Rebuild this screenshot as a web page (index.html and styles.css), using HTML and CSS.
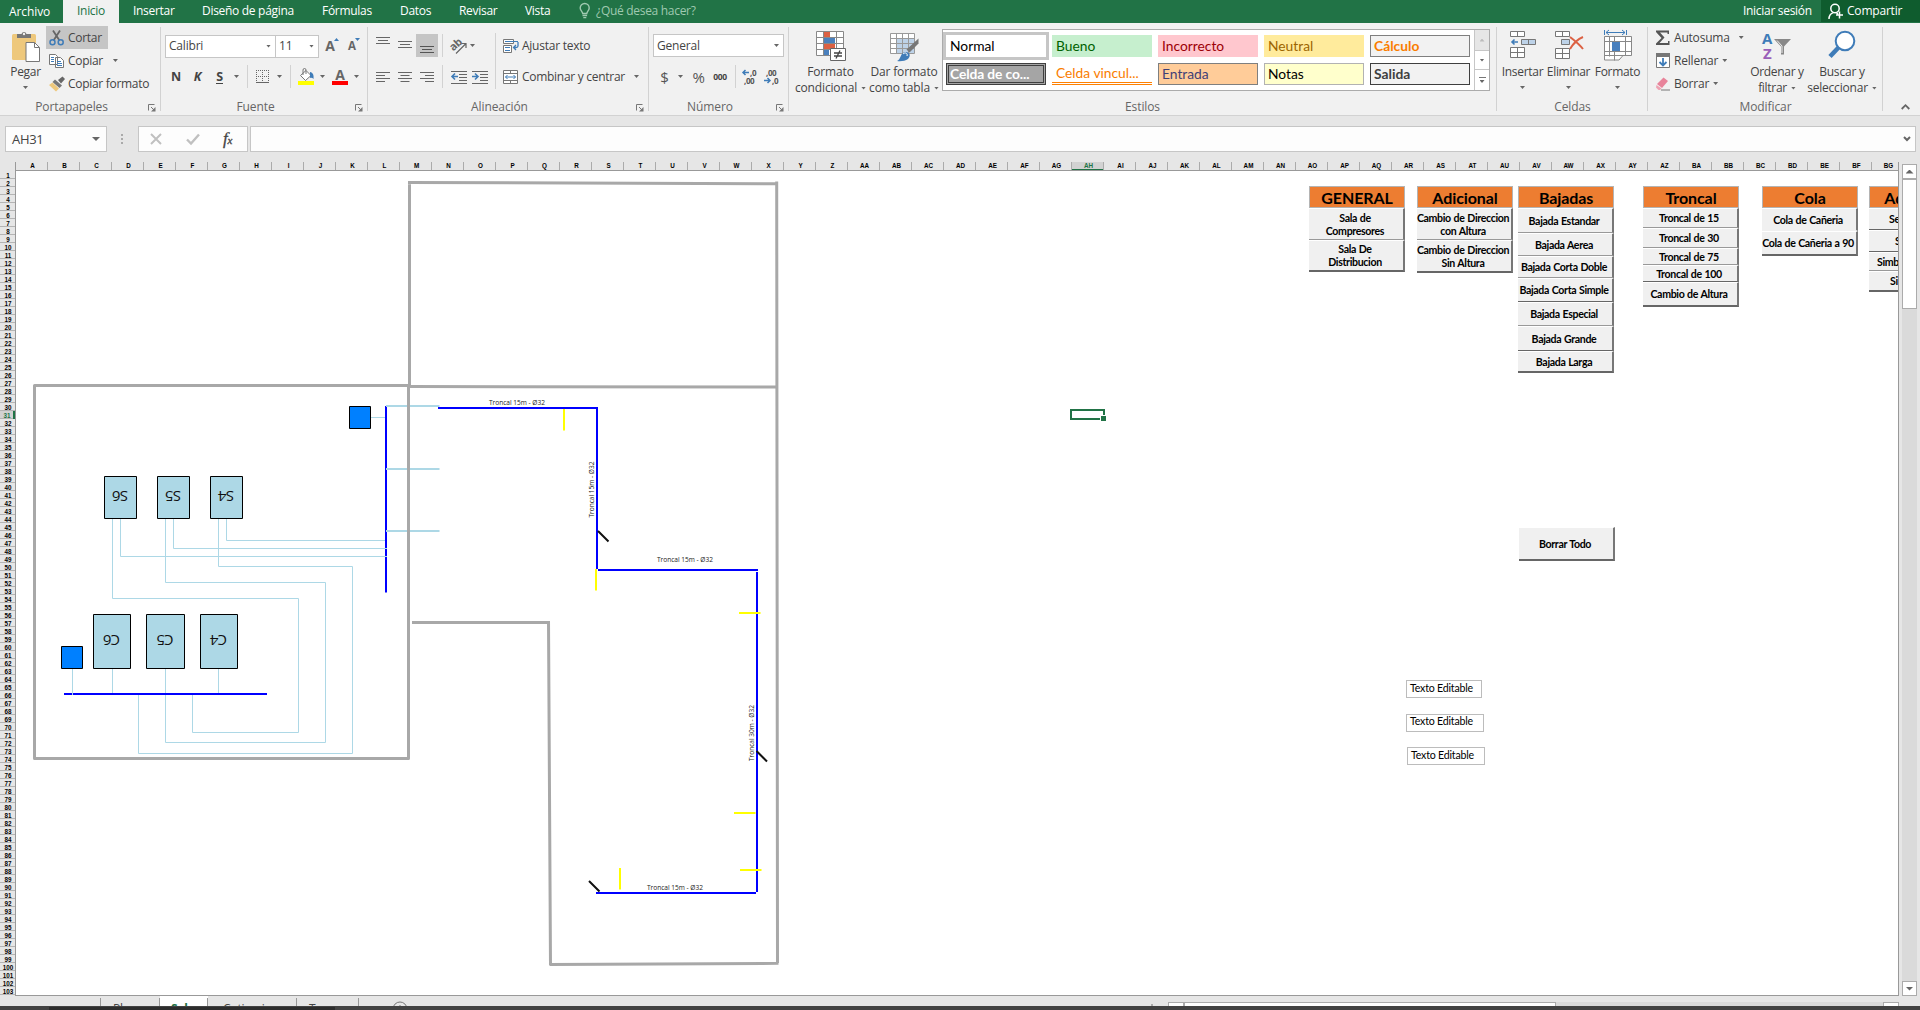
FILE: index.html
```html
<!DOCTYPE html>
<html lang="es">
<head>
<meta charset="utf-8">
<title>Excel</title>
<link rel="stylesheet" href="styles.css">
</head>
<body>
<div class="app">
<nav class="tabs">
  <span class="tab file">Archivo</span>
  <span class="tab active">Inicio</span>
  <span class="tab t-ins">Insertar</span>
  <span class="tab t-dis">Diseño de página</span>
  <span class="tab t-for">Fórmulas</span>
  <span class="tab t-dat">Datos</span>
  <span class="tab t-rev">Revisar</span>
  <span class="tab t-vis">Vista</span>
  <span class="tab tell"><svg width="12" height="16" viewBox="0 0 12 16" fill="none" stroke="#9fc9b0" stroke-width="1.4"><path d="M3.7 10.5C3.5 8.5 1.2 7.5 1.2 5a4.4 4.4 0 0 1 9 0c0 2.500-2.200 3.500-2.400 5.500zM3.500 12.500h4.600M4.300 14.600h3"/></svg>¿Qué desea hacer?</span>
  <span class="login">Iniciar sesión</span>
  <span class="share"><svg width="16" height="17" viewBox="0 0 16 17" fill="none" stroke="#fff" stroke-width="1.5"><circle cx="7" cy="5.500" r="4.200"/><path d="M1 16c0-3.500 1.800-5.600 4.500-6.400M8 9.500l2 1.500M11.500 8.500v7M8 12h7"/></svg>Compartir</span>
</nav>

<header class="ribbon">
  <section class="group g-clip">
    <div class="body">
      <div class="big paste">
        <svg width="30" height="33" viewBox="0 0 30 33"><rect x="1" y="4" width="24" height="26" rx="1.500" fill="#eec87c"/><path d="M6 8V4h4.500a2.600 2.600 0 0 1 5 0H20v4z" fill="#777"/><circle cx="13" cy="4" r="1.200" fill="#f1f1f1"/><path d="M15 12.500h8.500l5 5V31.500H15z" fill="#fff" stroke="#777"/><path d="M23.500 12.500v5h5" fill="none" stroke="#777"/></svg>
        <span>Pegar</span><i class="arr"></i>
      </div>
      <div class="stack clipcmds">
        <div class="cmd pressed"><svg width="16" height="16" viewBox="0 0 16 16" fill="none"><path d="M4 0.500l6.500 10M11 0.500L4.500 10.500" stroke="#666" stroke-width="1.800"/><circle cx="3.500" cy="12.200" r="2.500" stroke="#3f7cb8" stroke-width="1.500"/><circle cx="11.700" cy="12.200" r="2.500" stroke="#3f7cb8" stroke-width="1.500"/></svg><span>Cortar</span></div>
        <div class="cmd"><svg width="16" height="16" viewBox="0 0 16 16" stroke="#777" fill="#fff"><path d="M.5 1.500h6l2 2v8H.5zM6.500 4.500h5l3 3v7h-8z"/><path d="M2 4.500h3M2 6.500h3M2 8.500h3M8 8.500h4M8 10.500h5M8 12.500h5" stroke="#3f7cb8"/></svg><span>Copiar</span><i class="arr gap-copy"></i></div>
        <div class="cmd"><svg width="16" height="16" viewBox="0 0 16 16"><path d="M9 4l4.500-3.500L16 3l-4 4.500z" fill="#666"/><path d="M6 3.500l7 6-2.500 2.500-7-6z" fill="#777"/><path d="M3.500 6.500l6.500 6L7 15.500 0 9z" fill="#eec87c"/></svg><span>Copiar formato</span></div>
      </div>
    </div>
    <div class="label">Portapapeles<svg class="launch" width="8" height="8" viewBox="0 0 8 8"><path d="M.5 6.500v-6h6M3 3l3 3" fill="none" stroke="#777"/><path d="M7.500 3v4.500H3z" fill="#777"/></svg></div>
  </section>

  <section class="group g-font">
    <div class="body rows">
      <div class="row font1">
        <div class="combo c-font"><span>Calibri</span><i class="arr"></i></div>
        <div class="combo c-size"><span>11</span><i class="arr"></i></div>
        <span class="grow-a">A<svg width="5" height="3" viewBox="0 0 5 3"><path d="M0 3L2.500 0 5 3z" fill="#3f7cb8"/></svg></span>
        <span class="grow-a small">A<svg width="5" height="3" viewBox="0 0 5 3"><path d="M0 0h5L2.500 3z" fill="#3f7cb8"/></svg></span>
      </div>
      <div class="row font2">
        <b>N</b><b><em>K</em></b><b class="under">S</b><i class="arr"></i><i class="sep"></i>
        <svg width="13" height="13" viewBox="0 0 13 13" stroke="#666" fill="none"><path d="M0 .5h13M.5 0v12M6.500 0v12M12.500 0v12M0 6.500h13" stroke-dasharray="1 1"/><path d="M0 12.500h13"/></svg>
        <i class="arr"></i><i class="sep"></i>
        <svg width="16" height="17" viewBox="0 0 16 17"><path d="M8 2.500l5 5-5.500 5-5-5z" fill="#fff" stroke="#777"/><path d="M5 7V2a1.500 1.500 0 0 1 3 0v4" fill="none" stroke="#777"/><path d="M12 4c3 .5 4 3 3.500 7-1-1-2-1.500-3.500-1z" fill="#3f7cb8"/><path d="M0 13h16v4H0z" fill="#ff0"/></svg>
        <i class="arr"></i>
        <span class="fontcolor">A</span>
        <i class="arr"></i>
      </div>
    </div>
    <div class="label">Fuente<svg class="launch" width="8" height="8" viewBox="0 0 8 8"><path d="M.5 6.500v-6h6M3 3l3 3" fill="none" stroke="#777"/><path d="M7.500 3v4.500H3z" fill="#777"/></svg></div>
  </section>

  <section class="group g-align">
    <div class="body">
      <div class="rows">
        <div class="row al">
          <svg width="14" height="23" viewBox="0 0 14 23" stroke="#666"><path d="M0 3.500h14M2 6.500h10M0 9.500h14"/></svg>
          <svg width="14" height="23" viewBox="0 0 14 23" stroke="#666"><path d="M0 7.500h14M2 10.500h10M0 13.500h14"/></svg>
          <span class="on"><svg width="14" height="23" viewBox="0 0 14 23" stroke="#555"><path d="M0 12.500h14M2 15.500h10M0 18.500h14"/></svg></span>
          <i class="sep"></i>
          <svg width="18" height="18" viewBox="0 0 18 18"><text x="0" y="12" transform="rotate(-42 5 9)" class="ab">ab</text><path d="M6 16.500L15.500 7M11.500 6.500h4.500v4.500" fill="none" stroke="#666" stroke-width="1.200"/></svg>
          <i class="arr left"></i>
        </div>
        <div class="row al">
          <svg width="14" height="12" viewBox="0 0 14 12" stroke="#666"><path d="M0 1.500h14M0 4.500h9M0 7.500h14M0 10.500h9"/></svg>
          <svg width="14" height="12" viewBox="0 0 14 12" stroke="#666"><path d="M0 1.500h14M2.500 4.500h9M0 7.500h14M2.500 10.500h9"/></svg>
          <svg width="14" height="12" viewBox="0 0 14 12" stroke="#666"><path d="M0 1.500h14M5 4.500h9M0 7.500h14M5 10.500h9"/></svg>
          <i class="sep"></i>
          <svg width="16" height="14" viewBox="0 0 16 14" stroke="#666"><path d="M0 1.500h16M8 4.500h8M8 7.500h8M8 10.500h8M0 13.500h16"/><path d="M1 6.500h6M4 3.500l-3 3 3 3" fill="none" stroke="#3f7cb8" stroke-width="1.600"/></svg>
          <svg width="16" height="14" viewBox="0 0 16 14" stroke="#666"><path d="M0 1.500h16M8 4.500h8M8 7.500h8M8 10.500h8M0 13.500h16"/><path d="M0 6.500h6M3 3.500l3 3-3 3" fill="none" stroke="#3f7cb8" stroke-width="1.600"/></svg>
        </div>
      </div>
      <i class="sep tall"></i>
      <div class="rows wraps">
        <div class="row flexrow"><svg width="16" height="16" viewBox="0 0 16 16" fill="#fff" stroke="#777"><path d="M.5 1.500h10v4H.5zM.5 7.500h8v7h-8z"/><path d="M2 3.500h13M2 9.500h5M2 12.500h5" stroke="#3f7cb8"/><path d="M15 4v4c0 1-.5 1.500-2 1.500h-2M13 7l-2.500 2.500L13 12" fill="none" stroke="#3f7cb8" stroke-width="1.300"/></svg><span>Ajustar texto</span></div>
        <div class="row flexrow merge"><svg width="16" height="16" viewBox="0 0 16 16" fill="#fff" stroke="#777"><path d="M.5 1.500h14v13H.5zM.5 4.500h14M.5 11.500h14M7.500 1.500v3M7.500 11.500v3"/><path d="M2.500 8h10M4.500 6l-2 2 2 2M10.500 6l2 2-2 2" fill="none" stroke="#3f7cb8"/></svg><span>Combinar y centrar</span><i class="arr gap-merge"></i></div>
      </div>
    </div>
    <div class="label">Alineación<svg class="launch" width="8" height="8" viewBox="0 0 8 8"><path d="M.5 6.500v-6h6M3 3l3 3" fill="none" stroke="#777"/><path d="M7.500 3v4.500H3z" fill="#777"/></svg></div>
  </section>

  <section class="group g-num">
    <div class="body rows">
      <div class="combo c-num"><span>General</span><i class="arr"></i></div>
      <div class="row num2">
        <span class="sym">$</span><i class="arr"></i><span class="sym">%</span><span class="zeros">000</span><i class="sep"></i>
        <svg width="16" height="16" viewBox="0 0 16 16"><text x="8" y="7" class="dec">,0</text><text x="2" y="15" class="dec">,00</text><path d="M1 3.500h6M3.500 1L1 3.500 3.500 6" fill="none" stroke="#3f7cb8" stroke-width="1.500"/></svg>
        <svg width="16" height="16" viewBox="0 0 16 16"><text x="2" y="7" class="dec">,00</text><text x="8" y="15" class="dec">,0</text><path d="M0 11.500h6M3.500 9L6 11.500 3.500 14" fill="none" stroke="#3f7cb8" stroke-width="1.500"/></svg>
      </div>
    </div>
    <div class="label">Número<svg class="launch" width="8" height="8" viewBox="0 0 8 8"><path d="M.5 6.500v-6h6M3 3l3 3" fill="none" stroke="#777"/><path d="M7.500 3v4.500H3z" fill="#777"/></svg></div>
  </section>

  <section class="group g-styles">
    <div class="body">
      <div class="big b-cond">
        <svg width="30" height="33" viewBox="0 0 30 33"><path d="M.5 1.500h27v24H.5z" fill="#fff"/><path d="M8 2h6v5H8zM8 14h11v5H8z" fill="#dc6143"/><path d="M8 8h11v5H8zM8 20h5v5H8z" fill="#4a80bd"/><path d="M.5 1.500h27v24H.5zM7.500 1v24M20.500 1v24M.5 7.500h27M.5 13.500h27M.5 19.500h27" fill="none" stroke="#888"/><path d="M14.500 18.500h15v12h-15z" fill="#fff" stroke="#666"/><path d="M18 23h8M18 26h8M24 20.500l-4 8" stroke="#444" stroke-width="1.300"/></svg>
        <span>Formato</span><span>condicional<i class="arr"></i></span>
      </div>
      <div class="big b-table">
        <svg width="30" height="33" viewBox="0 0 30 33"><path d="M1.500 3.500h24v20h-24z" fill="#fff"/><path d="M7 9h18v15H7z" fill="#bdd2e8"/><path d="M1.500 3.500h24v20h-24zM7.500 3v20M13.500 3v20M19.500 3v20M1.500 8.500h24M1.500 13.500h24M1.500 18.500h24" fill="none" stroke="#999"/><path d="M29.500 8.500v5l-9 9-3-3z" fill="#777"/><path d="M8 31c4-1 3-9 9-9 4 0 5 4 2 7-3 2-7 2.500-11 2z" fill="#3f7cb8"/><path d="M14 24c2-2 5-1 4 2" stroke="#fff" fill="none"/></svg>
        <span>Dar formato</span><span>como tabla<i class="arr"></i></span>
      </div>
      <div class="gallery">
        <div class="cells">
          <div class="cell normal">Normal</div><div class="cell bueno">Bueno</div><div class="cell incorrecto">Incorrecto</div><div class="cell neutral">Neutral</div><div class="cell calculo">Cálculo</div>
          <div class="cell comprob"><span>Celda de co...</span></div><div class="cell vinc">Celda vincul...</div><div class="cell entrada">Entrada</div><div class="cell notas">Notas</div><div class="cell salida">Salida</div>
        </div>
        <div class="gscroll"><span class="off"><i class="arr up"></i></span><span><i class="arr"></i></span><span class="more"><i class="arr"></i></span></div>
      </div>
    </div>
    <div class="label">Estilos</div>
  </section>

  <section class="group g-cells">
    <div class="body">
      <div class="big b-ins">
        <svg width="28" height="33" viewBox="0 0 28 33" fill="#fff" stroke="#777"><path d="M1.500 1.500h14v5h-14zM8.500 1.500v5M1.500 17.500h14v10h-14zM8.500 17.500v10M1.500 22.500h14"/><path d="M12.500 9.500h14v5h-14zM19.500 9.500v5" fill="#bdd2e8"/><path d="M3 12h6M5.500 9.500L3 12l2.500 2.500" fill="none" stroke="#3f7cb8" stroke-width="1.600"/></svg>
        <span>Insertar</span><i class="arr"></i>
      </div>
      <div class="big b-del">
        <svg width="30" height="33" viewBox="0 0 30 33" fill="#fff" stroke="#777"><path d="M1.500 1.500h14v5h-14zM8.500 1.500v5M1.500 18.500h14v10h-14zM8.500 18.500v10M1.500 23.500h14"/><path d="M7.500 9.500h8v5h-8z" fill="#bdd2e8"/><path d="M16 7c4 3 9 7 13 12M29 7c-5 2-10 7-13 12" stroke="#dc6143" stroke-width="2" fill="none"/></svg>
        <span>Eliminar</span><i class="arr"></i>
      </div>
      <div class="big b-fmt">
        <svg width="28" height="33" viewBox="0 0 28 33" fill="#fff" stroke="#888"><path d="M.5 6.500h27v19H19l-4 4.500H.5zM5.500 6.500v20M21.500 6.500v19M.5 11.500h27M.5 21.500h27M.5 25.500h20M10.500 6.500v24"/><path d="M8 12h8v9H8z" fill="#4a80bd" stroke="none"/><path d="M.5 0v5M22.500 0v5M2 2.500h19M5 0L2 2.500 5 5M18 0l3 2.500L18 5" fill="none" stroke="#3f7cb8"/></svg>
        <span>Formato</span><i class="arr"></i>
      </div>
    </div>
    <div class="label">Celdas</div>
  </section>

  <section class="group g-edit">
    <div class="body">
      <div class="stack editcmds">
        <div class="cmd"><svg width="16" height="16" viewBox="0 0 16 16"><path d="M1 .5h13V4h-1.500V2.500H5l4.500 5L4.500 13H13V11h1.500v4H1v-1.500L6.500 8 1 2z" fill="#555"/></svg><span>Autosuma</span><i class="arr gap-sum"></i></div>
        <div class="cmd"><svg width="16" height="16" viewBox="0 0 16 16"><path d="M1.500.5h13v14h-13z" fill="#fff" stroke="#777"/><path d="M1 0h14v4H1z" fill="#777"/><path d="M8 5v7.500M4.500 9L8 12.500 11.500 9" fill="none" stroke="#3f7cb8" stroke-width="1.800"/></svg><span>Rellenar</span><i class="arr"></i></div>
        <div class="cmd"><svg width="16" height="16" viewBox="0 0 16 16"><path d="M8.500 1.500L13 5l-6 7-5-4z" fill="#e8839a"/><path d="M1.500 9l5 3.500-1.500 1.500H3.500L1 11.500z" fill="#eea3b3"/><path d="M6 14h9" stroke="#777"/></svg><span>Borrar</span><i class="arr"></i></div>
      </div>
      <div class="big b-sort">
        <svg width="30" height="33" viewBox="0 0 30 33"><text x="0" y="14" class="az a" textLength="11">A</text><text x="1" y="28.500" class="az z">Z</text><path d="M12 9h17l-7 7.500v8h-3v-8z" fill="#888"/><path d="M15 10.500l5 5.500v7" stroke="#eee" fill="none"/></svg>
        <span>Ordenar y</span><span>filtrar<i class="arr"></i></span>
      </div>
      <div class="big b-find">
        <svg width="28" height="33" viewBox="0 0 28 33" fill="none"><path d="M11 17L2 26.500" stroke="#3f7cb8" stroke-width="4.500"/><circle cx="17" cy="11" r="9.300" fill="#fff" stroke="#3f7cb8" stroke-width="2"/></svg>
        <span>Buscar y</span><span>seleccionar<i class="arr"></i></span>
      </div>
    </div>
    <div class="label">Modificar</div>
  </section>
  <svg class="collapse" width="9" height="6" viewBox="0 0 9 6"><path d="M.7 5L4.500 1.200 8.300 5" fill="none" stroke="#666" stroke-width="1.800"/></svg>
</header>

<div class="formulabar">
  <div class="box namebox"><span>AH31</span><i class="arr big-arr"></i></div>
  <svg class="dots" width="2" height="11" viewBox="0 0 2 11" fill="#aaa"><path d="M0 0h2v2H0zM0 4h2v2H0zM0 8h2v2H0z"/></svg>
  <div class="box fx">
    <svg width="12" height="12" viewBox="0 0 12 12"><path d="M1 1l10 10M11 1L1 11" stroke="#c0c0c0" stroke-width="2"/></svg>
    <svg width="14" height="12" viewBox="0 0 14 12"><path d="M1 6.500l4 4L13 1.500" fill="none" stroke="#c0c0c0" stroke-width="2.400"/></svg>
    <span><em>f</em><small>x</small></span>
  </div>
  <div class="box input"><svg width="8" height="6" viewBox="0 0 8 6"><path d="M1 1l3 3 3-3" fill="none" stroke="#666" stroke-width="2"/></svg></div>
</div>

<main class="work">
  <div class="rowheads" id="rows"></div>
  <div class="gridcol">
    <div class="colheads" id="cols"></div>
    <div class="canvas">
      <svg class="plan" width="1882" height="824" viewBox="16 171 1882 824" fill="none">
        <g stroke="#add8e6">
          <path d="M371 417.500h15M112.500 519v79.500h186v134h-106V695M120.500 519v37.500H386M165.500 519v63.500h160v160h-160V669M173.500 519v29.500H386M218.500 519v47.500h134v187h-214V695M226.500 519v21.500H386M112.500 669v25M218.500 669v25"/>
        </g>
        <g stroke="#a8a8a8" stroke-width="3">
          <path d="M409.500 182v203M408 182.500L778 183.800M776.700 181.500L777.500 963M412 622.500h137M548.500 621L550.500 965M549.500 964.500L778.500 963.300M409 386.500L776 387"/>
        </g>
        <g stroke="#00f" stroke-width="2">
          <path d="M386 406v186.500M64 694h203M438 408h160M597 407v162M598 570h160M757 572v320M596 893h160"/>
        </g>
        <path d="M386 406h53.500M386 469h53.500M386 531h53.500" stroke="#add8e6" stroke-width="2"/>
        <path d="M72.500 669v26M385 548.500h2M385 556.500h2" stroke="#add8e6"/>
        <path d="M34.500 385.500h374v373h-374z" stroke="#a8a8a8" stroke-width="3" stroke-linejoin="round"/>
        <path d="M564 409v21.500M596 569v21.500M739 613h21.500M734 813h21.500M620 868v21.500M740 870h21.500" stroke="#ff0" stroke-width="2"/>
        <path d="M598 531l10.500 10.500M756.500 751l10.500 10.500M589 881l10.500 10.500" stroke="#111" stroke-width="2"/>
        <g stroke="#000" fill="#add8e6">
          <path d="M104.500 476.500h32v42h-32zM157.500 476.500h32v42h-32zM210.500 476.500h32v42h-32zM93.500 614.500h37v54h-37zM146.500 614.500h38v54h-38zM200.500 614.500h37v54h-37z"/>
          <path d="M349.500 406.500h21v22h-21zM61.500 646.500h21v22h-21z" fill="#0080ff"/>
        </g>
        <g class="unit">
          <text transform="translate(128 491) rotate(180)" textLength="16">S6</text>
          <text transform="translate(181 491) rotate(180)" textLength="16">S5</text>
          <text transform="translate(234 491) rotate(180)" textLength="16">S4</text>
          <text transform="translate(120 635) rotate(180)" textLength="17">C6</text>
          <text transform="translate(173.500 635) rotate(180)" textLength="17">C5</text>
          <text transform="translate(227 635) rotate(180)" textLength="17">C4</text>
        </g>
        <g class="pipe">
          <text x="489" y="405" textLength="56">Troncal 15m - Ø32</text>
          <text x="657" y="562" textLength="56">Troncal 15m - Ø32</text>
          <text x="647" y="890" textLength="56">Troncal 15m - Ø32</text>
          <text transform="translate(594 517.500) rotate(-90)" textLength="56">Troncal 15m - Ø32</text>
          <text transform="translate(754 761) rotate(-90)" textLength="56">Troncal 30m - Ø32</text>
        </g>
      </svg>
      <div class="selection"><i></i></div>

      <div class="panel p-general"><h3>GENERAL</h3><button class="h32">Sala de<br>Compresores</button><button class="h32 last">Sala De<br>Distribucion</button></div>
      <div class="panel p-adic"><h3>Adicional</h3><button class="h32">Cambio de Direccion<br>con Altura</button><button class="h33 last">Cambio de Direccion<br>Sin Altura</button></div>
      <div class="panel p-baj"><h3>Bajadas</h3><button class="h25">Bajada Estandar</button><button class="h23">Bajada Aerea</button><button class="h22">Bajada Corta Doble</button><button class="h24 dark">Bajada Corta Simple</button><button class="h24">Bajada Especial</button><button class="h25 dark">Bajada Grande</button><button class="h22 last">Bajada Larga</button></div>
      <div class="panel p-tron"><h3>Troncal</h3><button class="h20">Troncal de 15</button><button class="h20">Troncal de 30</button><button class="h17">Troncal de 75</button><button class="h17 dark">Troncal de 100</button><button class="h25 last">Cambio de Altura</button></div>
      <div class="panel p-cola"><h3>Cola</h3><button class="h23 flat">Cola de Cañeria</button><button class="h25 last">Cola de Cañeria a 90</button></div>
      <div class="panel p-extra"><h3>Adicional</h3><button class="h22 dark">Se</button><button class="h22 dark e2">S</button><button class="h19 e3">Simb</button><button class="h21 last e4">Si</button></div>
      <div class="panel p-clear"><button class="h34 last">Borrar Todo</button></div>
      <div class="edit e-a">Texto Editable</div>
      <div class="edit e-b">Texto Editable</div>
      <div class="edit e-c">Texto Editable</div>
    </div>
  </div>
  <div class="vscroll"><span class="sbtn"><i class="arr up big-arr"></i></span><span class="thumb"></span><span class="track"></span><span class="sbtn"><i class="arr big-arr"></i></span></div>
</main>

<footer class="sheets">
  <div class="sheet first"></div>
  <div class="sheet s-pl">Planos</div>
  <div class="sheet current">Sala</div>
  <div class="sheet s-cot">Cotizacion</div>
  <div class="sheet s-tr">Tramos</div>
  <svg class="plus" width="16" height="16" viewBox="0 0 16 16" fill="none" stroke="#777"><circle cx="8" cy="8" r="7"/><path d="M8 4v8M4 8h8"/></svg>
  <div class="hscroll"><i class="hdot"></i><span class="hbtn"></span><span class="hthumb"></span><span class="htrack"></span><span class="hbtn"></span></div>
</footer>
<div class="taskbar"><i></i></div>
</div>
<script src="headers.js"></script>
</body>
</html>
```
FILE: styles.css
```css
* { box-sizing: border-box; }
body { margin: 0; background: #fff; overflow: hidden; }
.app { width: 1920px; height: 1010px; display: flex; flex-direction: column; overflow: hidden; font: 12px/16px "Open Sans", "Noto Sans", sans-serif; color: #444; letter-spacing: -0.3px; }
svg { flex: none; display: block; overflow: visible; }
.arr { flex: none; width: 5px; height: 3px; background: #666; clip-path: polygon(0 0, 100% 0, 50% 100%); }
.arr.up { clip-path: polygon(0 100%, 100% 100%, 50% 0); }
.arr.big-arr { width: 8px; height: 4px; }
.sep { width: 1px; height: 23px; background: #d2d2d2; }

.tabs { height: 23px; flex: none; display: flex; background: #217346; color: #fff; white-space: nowrap; }
.tab { line-height: 22px; flex: none; }
.tab.file { width: 63px; padding-left: 9px; line-height: 24px; letter-spacing: -0.1px; }
.tab.active { width: 56px; background: #f1f1f1; color: #217346; text-align: center; }
.t-ins { width: 68px; margin-left: 14px; }
.t-dis { width: 121px; padding-left: 1px; }
.t-for { width: 78px; }
.t-dat { width: 59px; }
.t-rev { width: 66px; }
.t-vis { width: 54px; }
.tell { display: flex; gap: 5px; color: #9fc9b0; width: 1164px; }
.tell svg { margin-top: 3px; }
.login { width: 78px; line-height: 22px; flex: none; }
.share { width: 99px; background: #0f5c2e; display: flex; gap: 3px; padding: 0 0 0 7px; line-height: 22px; height: 22px; letter-spacing: -0.2px; }
.share svg { margin-top: 3px; }

.ribbon { height: 93px; flex: none; background: #f1f1f1; border-bottom: 1px solid #d2d2d2; display: flex; white-space: nowrap; }
.group { flex: none; height: 92px; padding-top: 3px; display: flex; flex-direction: column; background: linear-gradient(#d2d2d2, #d2d2d2) right 4px / 1px 84px no-repeat; }
.g-clip { width: 161px; }
.g-font { width: 207px; }
.g-align { width: 281px; }
.g-num { width: 140px; }
.g-styles { width: 708px; }
.g-cells { width: 151px; }
.g-edit { width: 235px; }
.body { height: 72px; flex: none; display: flex; }
.label { display: flex; justify-content: center; align-items: center; color: #666; height: 16px; margin-left: -14px; margin-top: 1px; position: relative; width: calc(100% + 10px); letter-spacing: -0.1px; }
.g-styles .label, .g-cells .label { margin-left: 0; width: 100%; }
.g-styles .label { padding-right: 1px; }
.g-edit .label { margin-left: 0; width: 100%; }
.launch { position: absolute; right: 1px; top: 5px; }
.collapse { margin: 81px 0 0 18px; }

.big { display: flex; flex-direction: column; align-items: center; padding-top: 4px; }
.big svg { margin-bottom: 1px; }
.big > .arr { margin-top: 6px; }
.big span { display: flex; align-items: center; line-height: 16px; }
.big span .arr { margin-left: 4px; }
.paste { width: 46px; padding-left: 5px; }
.stack { display: flex; flex-direction: column; }
.cmd { height: 23px; display: flex; align-items: center; padding-left: 3px; }
.cmd svg { margin-right: 3px; }
.cmd .arr { margin-left: 4px; }
.cmd .gap-copy { margin-left: 10px; }
.cmd .gap-sum { margin-left: 9px; }
.pressed { background: #c5c5c5; width: 62px; }

.rows { display: flex; flex-direction: column; padding-top: 8px; gap: 8px; }
.row { display: grid; height: 23px; align-items: center; justify-items: center; }
.combo { height: 23px; background: #fff; border: 1px solid #c6c6c6; display: flex; align-items: center; justify-content: space-between; padding: 0 4px 0 3px; letter-spacing: -0.2px; }
.body.rows { padding-left: 4px; }
.font1 { grid-template-columns: 111px 43px 26px 18px; justify-items: stretch; }
.c-size { margin-left: -1px; }
.c-font, .c-size { font-size: 12px; }
.grow-a { display: flex; justify-content: center; font: bold 14px/24px "Open Sans", sans-serif; color: #666; letter-spacing: 0; }
.grow-a.small { font-size: 11.5px; }
.grow-a svg { margin: 4px 0 0 -1px; }
.font2 { grid-template-columns: 22px 21px 23px 11px 11px 19px 15px 7px 24px 9px 26px 7px; }
.font2 b { font-size: 12.5px; }
.under { border-bottom: 1px solid #444; line-height: 13px; }
.fontcolor { width: 16px; height: 17px; border-bottom: 4px solid #f00; text-align: center; font: bold 14px/13px "Open Sans", sans-serif; color: #666; }
.g-align .rows { padding-left: 4px; }
.al { grid-template-columns: 22px 22px 22px 9px 23px 20px; }
.on { width: 22px; height: 23px; background: #c5c5c5; padding-left: 4px; }
.arr.left { justify-self: start; }
.ab { font: bold 11px "Open Sans", sans-serif; fill: #666; letter-spacing: -0.4px; }
.sep.tall { height: 56px; margin: 7px 0 0 5px; }
.g-align .wraps { padding-left: 7px; }
.flexrow { display: flex; gap: 3px; letter-spacing: -0.25px; }
.merge { letter-spacing: -0.28px; }
.gap-merge { margin-left: 6px; }
.c-num { width: 131px; }
.num2 { grid-template-columns: 15px 17px 19px 24px 7px 22px 22px; padding-left: 4px; }
.sym { font-size: 15px; color: #555; }
.zeros { font: bold 8.5px "Open Sans", sans-serif; }
.dec { font: bold 8px "Open Sans", sans-serif; fill: #555; letter-spacing: -0.4px; }

.b-cond { width: 75px; margin-left: 4px; }
.b-table { width: 74px; padding-right: 2px; }
.b-cond span, .b-table span { letter-spacing: -0.15px; }
.gallery { width: 548px; flex: none; height: 62px; margin-top: 3px; border: 1px solid #ababab; background: #fff; display: flex; }
.cells { width: 531px; display: grid; grid-template-columns: repeat(5, 100px); grid-auto-rows: 22px; gap: 6px; padding: 5px 0 0 3px; }
.cell { font: 13.8px/21px Lato, sans-serif; padding-left: 4px; letter-spacing: 0; border: 0 solid #7f7f7f; }
.normal { background: #fff; color: #000; outline: 3px solid #c6c6c6; }
.bueno { background: #c6efce; color: #006100; }
.incorrecto { background: #ffc7ce; color: #9c0006; }
.neutral { background: #ffeb9c; color: #9c6500; }
.calculo { background: #f2f2f2; color: #fa7d00; font-weight: bold; border-width: 1px; line-height: 19px; padding-left: 3px; }
.comprob { background: #a5a5a5; color: #fff; font-weight: bold; border: 1px solid #3f3f3f; padding: 1px; }
.comprob span { display: block; height: 18px; border: 1px solid #3f3f3f; line-height: 15px; padding-left: 1px; letter-spacing: -0.1px; }
.vinc { color: #fa7d00; border-bottom: 3px double #ff8001; line-height: 20px; }
.entrada { background: #ffcc99; color: #3f3f76; border-width: 1px; line-height: 19px; padding-left: 3px; }
.notas { background: #ffffcc; color: #000; border: 1px solid #b2b2b2; line-height: 19px; padding-left: 3px; }
.salida { background: #f2f2f2; color: #3f3f3f; font-weight: bold; border: 1px solid #3f3f3f; line-height: 19px; padding-left: 3px; }
.gscroll { width: 15px; display: grid; grid-template-rows: 21px 19px 20px; border-left: 1px solid #c6c6c6; }
.gscroll span { display: flex; flex-direction: column; align-items: center; justify-content: center; border-bottom: 1px solid #c6c6c6; }
.gscroll .off { background: #e6e6e6; }
.off .arr { background: #bbb; }
.gscroll .more { border: 0; gap: 2px; }
.more::before { content: ""; width: 7px; height: 1px; background: #777; }

.b-ins { width: 45px; margin-left: 3px; }
.b-del { width: 47px; }
.b-fmt { width: 51px; }
.editcmds { width: 96px; flex: none; margin-left: 4px; letter-spacing: -0.2px; }
.b-sort { width: 58px; }
.b-find { width: 72px; letter-spacing: -0.2px; }
.az { font: bold 15px "Open Sans", sans-serif; }
.a { fill: #3f7cb8; }
.z { fill: #9a5fb8; }

.formulabar { height: 46px; flex: none; background: #e6e6e6; display: flex; padding: 10px 0 0 5px; }
.box { height: 26px; border: 1px solid #c6c6c6; background: #fdfdfd; display: flex; align-items: center; }
.namebox { width: 102px; justify-content: space-between; padding: 0 6px; font-size: 13px; letter-spacing: -0.3px; }
.dots { margin: 8px 15px 0 14px; }
.fx { width: 110px; padding-left: 11px; }
.fx svg:nth-child(2) { margin-left: 24px; }
.fx span { margin-left: 23px; font: 17px/20px "Liberation Serif", serif; color: #444; -webkit-text-stroke: 0.3px #444; }
.fx small { font-size: 11px; font-style: italic; }
.input { width: 1666px; margin-left: 2px; justify-content: flex-end; padding-right: 4px; }

.work { height: 834px; flex: none; display: flex; background: #e6e6e6; }
.rowheads { width: 16px; padding-top: 9px; border-right: 1px solid #999; font: bold 6.3px/9px "Liberation Sans", sans-serif; color: #000; letter-spacing: 0; overflow: hidden; }
.rowheads div { height: 8px; text-align: center; box-shadow: inset 0 -1px #b4b4b4; padding-left: 1px; }
.rowheads .sel { background: #d2d2d2; color: #217346; border-right: 2px solid #217346; }
.gridcol { width: 1883px; display: flex; flex-direction: column; border-right: 1px solid #999; }
.colheads { height: 9px; flex: none; display: flex; overflow: hidden; border-bottom: 1px solid #999; font: bold 6.3px/8px "Liberation Sans", sans-serif; color: #000; letter-spacing: 0; }
.colheads div { width: 32px; flex: none; text-align: center; border-right: 1px solid #ababab; padding-left: 2px; }
.colheads .sel { background: #d2d2d2; color: #217346; box-shadow: inset 0 -1px #217346; }
.canvas { height: 825px; background: #fff; border-bottom: 1px solid #999; position: relative; overflow: hidden; }
.plan { position: absolute; left: 0; top: 0; }
.unit { font: 15px "Open Sans", sans-serif; fill: #111; letter-spacing: 0; }
.pipe { font: 6.6px "Open Sans", sans-serif; fill: #222; letter-spacing: 0; }
.selection { position: absolute; left: 1054px; top: 238px; width: 35px; height: 11px; border: 2px solid #217346; }
.selection i { position: absolute; right: -4px; bottom: -4px; width: 7px; height: 7px; background: #217346; border: 1px solid #fff; }

.panel { position: absolute; top: 15px; width: 96px; display: flex; flex-direction: column; }
.p-general { left: 1293px; }
.p-adic { left: 1401px; }
.p-baj { left: 1502px; }
.p-tron { left: 1627px; }
.p-cola { left: 1746px; }
.p-extra { left: 1853px; }
.p-clear { left: 1503px; top: 356px; }
.panel h3 { margin: 0; height: 22px; background: #ed7d31; border: 1px solid #b4b4b4; color: #000; font: bold 16px/22px Lato, sans-serif; text-align: center; letter-spacing: -0.1px; }
.panel button { margin: 0; padding: 1px 2px 0 0; border: solid; border-width: 1px 2px 1px 0; border-color: #fff #777 #999 #fff; background: #f0f0f0; color: #000; font: bold 10.6px/13px Lato, sans-serif; letter-spacing: -0.35px; word-spacing: 0.5px; white-space: nowrap; display: flex; align-items: center; justify-content: center; text-align: center; }
.panel .dark { border-bottom-color: #666; }
.panel .last { border-bottom: 2px solid #666; }
.panel .flat { border-bottom-color: #f0f0f0; }
.h17 { height: 17px; }
.h19 { height: 19px; }
.h20 { height: 20px; }
.h21 { height: 21px; }
.h22 { height: 22px; }
.h23 { height: 23px; }
.h24 { height: 24px; }
.h25 { height: 25px; }
.h32 { height: 32px; }
.h33 { height: 33px; }
.h34 { height: 34px; }
.panel.p-extra button { justify-content: flex-start; padding-left: 20px; }
.panel.p-extra .e2 { padding-left: 26px; }
.panel.p-extra .e3 { padding-left: 8px; }
.panel.p-extra .e4 { padding-left: 21px; }
.edit { position: absolute; height: 18px; border: 1px solid #bcbcbc; padding-left: 3px; font: 10.6px/15px Lato, sans-serif; color: #000; letter-spacing: -0.2px; white-space: nowrap; }
.e-a { left: 1390px; top: 509px; width: 76px; }
.e-b { left: 1390px; top: 543px; width: 78px; line-height: 13px; }
.e-c { left: 1391px; top: 576px; width: 78px; }

.vscroll { width: 15px; margin: 2px 0 0 3px; display: flex; flex-direction: column; }
.sbtn { height: 15px; flex: none; background: #fff; border: 1px solid #ababab; display: flex; align-items: center; justify-content: center; }
.thumb { height: 130px; background: #fff; border: 1px solid #ababab; }
.track { height: 672px; background: #dadada; }

.sheets { height: 10px; flex: none; background: #e6e6e6; display: flex; overflow: hidden; line-height: 25px; }
.sheet { flex: none; height: 10px; border-style: solid; border-width: 0 1px 0 0; border-image: linear-gradient(transparent 30%, #999 30%) 1; }
.sheet.first { width: 101px; }
.s-pl { width: 59px; padding-left: 12px; }
.current { width: 48px; background: #fff; color: #217346; font-weight: bold; padding-left: 11px; box-shadow: 0 -1px #fff; position: relative; }
.s-cot { width: 89px; padding-left: 15px; letter-spacing: -0.2px; }
.s-tr { width: 62px; padding-left: 12px; }
.plus { margin: 5px 0 0 33px; }
.hscroll { display: flex; margin: 6px 0 0 743px; height: 10px; }
.hdot { width: 2px; margin: 2px 15px 0 0; background: #ababab; }
.hbtn { width: 16px; border: 1px solid #ababab; background: #fff; }
.hthumb { width: 372px; border: 1px solid #ababab; background: #fff; }
.htrack { width: 327px; background: #dadada; }
.taskbar { height: 4px; flex: none; background: #424242; display: flex; }
.taskbar i { margin: 1px 0 0 49px; width: 286px; background: #2d2d2d; }
```
FILE: headers.js
```js
// Column letters A..BG and row numbers 1..103 of the visible range.
const name = n => (n > 25 ? String.fromCharCode(64 + Math.floor(n / 26)) : '') + String.fromCharCode(65 + n % 26);
const fill = (id, count, label, selected) => {
  const host = document.getElementById(id);
  for (let i = 0; i < count; i++) {
    const cell = document.createElement('div');
    cell.textContent = label(i);
    if (i === selected) cell.className = 'sel';
    host.appendChild(cell);
  }
};
fill('cols', 59, name, 33);
fill('rows', 103, i => i + 1, 30);
```
